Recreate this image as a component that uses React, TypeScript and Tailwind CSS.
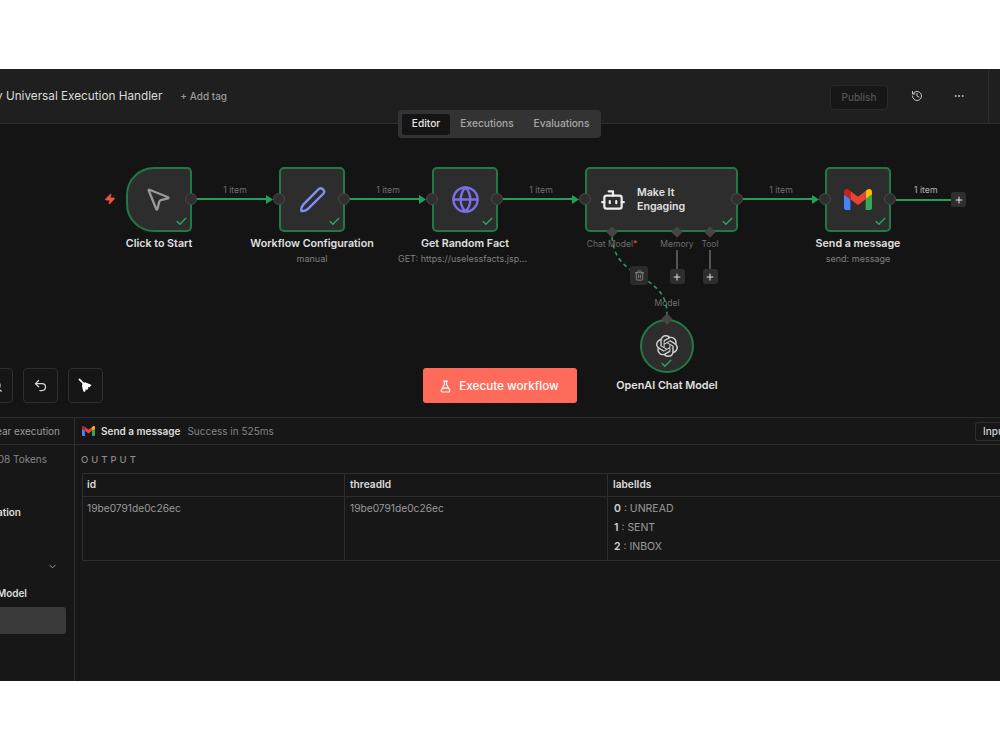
import type { ReactNode } from "react";
import { Bot, Check, ChevronDown, Ellipsis, FlaskConical, Globe, History, MousePointer2, Plus, Trash2, Undo2, Zap, ZoomOut } from "lucide-react";
import { SiOpenai } from "react-icons/si";

const GmailIcon = ({ className }: { className?: string }) => (
  <svg viewBox="52 42 88 66" className={className}>
    <path fill="#4285f4" d="M58 108h14V74L52 59v43c0 3.32 2.69 6 6 6" />
    <path fill="#34a853" d="M120 108h14c3.32 0 6-2.69 6-6V59l-20 15" />
    <path fill="#fbbc04" d="M120 48v26l20-15v-8c0-7.42-8.47-11.65-14.4-7.2" />
    <path fill="#ea4335" d="M72 74V48l24 18 24-18v26L96 92" />
    <path fill="#c5221f" d="M52 51v8l20 15V48l-5.6-4.2c-5.94-4.45-14.4-.22-14.4 7.2" />
  </svg>
);

const PenIcon = () => (
  <svg viewBox="0 0 30 30" className="h-[27px] w-[27px]" fill="none" stroke="#8390f5" strokeWidth="2.6" strokeLinejoin="round">
    <path d="M21.8 3.4a3.7 3.7 0 0 1 5.2 5.2L10 25.4c-2 1.8-5 2.6-7.4 2.4-.2-2.6.6-5.4 2.4-7.4z" />
  </svg>
);

const BroomIcon = () => (
  <svg viewBox="0 0 16 16" className="h-[15px] w-[15px]" fill="#ffffff">
    <path d="M1.5 1.5L6 6" stroke="#ffffff" strokeWidth="1.8" strokeLinecap="round" />
    <path d="M5 5.6L7.6 4.4L14.5 7.4L12 10L10.5 9.6L11 11.5L9 13L8.5 11.5L7.5 14.8L5.6 14L4.2 8.4z" />
  </svg>
);

const Done = ({ className = "right-[2px] bottom-[2px]" }: { className?: string }) => (
  <Check className={`absolute h-[13px] w-[13px] text-[#2fa866] ${className}`} strokeWidth={2.4} />
);

const AddButton = () => (
  <div className="flex h-[15px] w-[15px] shrink-0 items-center justify-center rounded-[3px] bg-[#2e2e2e]">
    <Plus className="h-[10px] w-[10px] text-[#dddddd]" strokeWidth={2.5} />
  </div>
);

type NodeProps = {
  title?: string;
  sub?: string;
  subClass?: string;
  boxClass: string;
  input?: boolean;
  children: ReactNode;
};

const Node = ({ title, sub, subClass = "", boxClass, input = true, children }: NodeProps) => (
  <div className="flex shrink-0 flex-col items-center">
    <div className={`relative flex h-[65px] items-center border-2 border-[#1f7a48] bg-[#2d2d2d] ${boxClass}`}>
      {input && <div className="absolute top-[24px] left-[-8px] h-[12px] w-[12px] rounded-full border border-[#484848] bg-[#2f2f2f]" />}
      {children}
      <div className="absolute top-[24px] right-[-7px] h-[12px] w-[12px] rounded-full border border-[#484848] bg-[#2f2f2f]" />
      <Done />
    </div>
    {title && (
      <div className="mt-[5px] flex w-0 justify-center text-[10.7px] leading-[14px] font-semibold whitespace-nowrap text-[#e0e0e0]">{title}</div>
    )}
    {sub && (
      <div className="mt-[2px] flex w-0 justify-center text-[9px] leading-[12px] whitespace-nowrap text-[#808080]">
        <span className={`shrink-0 ${subClass}`}>{sub}</span>
      </div>
    )}
  </div>
);

const Edge = () => (
  <div className="z-10 flex h-[65px] w-[87px] shrink-0 flex-col pt-[17px] pr-[6px] pl-[5px]">
    <span className="h-[12px] text-center text-[8.7px] leading-[12px] text-[#6f6f6f]">1 item</span>
    <div className="mt-[2px] flex h-[2px] items-center">
      <div className="h-[2px] flex-1 bg-[#22a05a]" />
      <svg viewBox="0 0 7 9" className="h-[9px] w-[7px] shrink-0 fill-[#22a05a]">
        <path d="M0 0l7 4.5L0 9z" />
      </svg>
    </div>
  </div>
);

const Connector = ({ label, line, className }: { label: ReactNode; line?: boolean; className: string }) => (
  <div className={`absolute top-[59px] flex w-[60px] flex-col items-center ${className}`}>
    <div className="h-[8px] w-[8px] rotate-45 bg-[#454545]" />
    <span className="mt-[2px] text-[8.5px] leading-[12px] whitespace-nowrap text-[#6f6f6f]">{label}</span>
    {line && <div className="h-[19px] w-[1.5px] bg-[#555555]" />}
    {line && <AddButton />}
  </div>
);

const Canvas = () => (
  <div className="relative h-[293px] overflow-hidden bg-[#141414] bg-[radial-gradient(#202020_0.8px,transparent_0.8px)] bg-[size:11px_11px]">
    {/* chat model link */}
    <svg className="absolute inset-0 h-full w-full" fill="none">
      <path d="M612 113C614 140 632 146 645 155C658 164 667 172 667 190" stroke="#22a05a" strokeWidth="1.6" strokeDasharray="4 3.5" />
    </svg>

    <Zap className="absolute top-[69px] left-[104px] h-[12px] w-[12px] fill-[#f0533f] text-[#f0533f]" />

    <div className="relative flex pt-[43px] pl-[126px]">
      <Node title="Click to Start" input={false} boxClass="w-[66px] justify-center rounded-l-[28px] rounded-r-[5px]">
        <MousePointer2 className="mr-[2px] mb-[2px] h-[28px] w-[28px] text-[#9a9a9a]" strokeWidth={2} />
      </Node>
      <Edge />
      <Node title="Workflow Configuration" sub="manual" boxClass="w-[66px] justify-center rounded-[5px]">
        <PenIcon />
      </Node>
      <Edge />
      <Node title="Get Random Fact" sub="GET: https://uselessfacts.jsp..." subClass="pr-[5px]" boxClass="w-[66px] justify-center rounded-[5px]">
        <Globe className="h-[29px] w-[29px] text-[#7b6fe6]" strokeWidth={2} />
      </Node>
      <Edge />
      <Node boxClass="w-[153px] gap-[11px] rounded-[5px] pl-[13px]">
        <Bot className="h-[26px] w-[26px] text-[#eeeeee]" strokeWidth={2} />
        <div className="text-[10.6px] leading-[14px] font-semibold text-[#e0e0e0]">
          Make It
          <br />
          Engaging
        </div>
        <Connector className="left-[-5px]" label={<>Chat Model<span className="text-[#e5484d]">*</span></>} />
        <Connector className="left-[60px]" label="Memory" line />
        <Connector className="left-[93px]" label="Tool" line />
      </Node>
      <Edge />
      <Node title="Send a message" sub="send: message" boxClass="w-[66px] justify-center rounded-[5px]">
        <GmailIcon className="h-[21px] w-[28px]" />
      </Node>
      <div className="relative flex h-[65px] items-center pl-[5px]">
        <span className="absolute top-[17px] left-[23px] text-[8.7px] leading-[12px] whitespace-nowrap text-[#b5b5b5]">1 item</span>
        <div className="h-[2px] w-[55px] bg-[#22a05a]" />
        <AddButton />
      </div>
    </div>

    <div className="absolute top-[142px] left-[630px] flex h-[19px] w-[18px] items-center justify-center rounded-[3px] bg-[#2b2b2b]">
      <Trash2 className="h-[11px] w-[11px] text-[#8a8a8a]" />
    </div>

    {/* OpenAI Chat Model */}
    <div className="absolute top-[173px] left-[640px] flex w-[54px] flex-col items-center">
      <span className="mb-[10px] text-[8.5px] leading-[12px] text-[#6f6f6f]">Model</span>
      <div className="relative flex h-[54px] w-[54px] shrink-0 items-center justify-center rounded-full border-2 border-[#1f7a48] bg-[#2d2d2d]">
        <div className="absolute top-[-6px] left-[21px] h-[8px] w-[8px] rotate-45 bg-[#454545]" />
        <SiOpenai className="h-[22px] w-[22px] text-[#cfcfcf]" />
        <Done className="bottom-[1px] left-[18px]" />
      </div>
      <div className="mt-[6px] text-[10.8px] leading-[14px] font-semibold whitespace-nowrap text-[#e0e0e0]">OpenAI Chat Model</div>
    </div>

    {/* canvas toolbar */}
    <div className="absolute inset-x-0 bottom-[14px] flex">
      <div className="ml-[-22px] flex gap-[10px]">
        <div className="flex h-[35px] w-[35px] items-center justify-center rounded-[4px] border border-[#2e2e2e] bg-[#161616]">
          <ZoomOut className="h-[14px] w-[14px] text-[#d5d5d5]" />
        </div>
        <div className="flex h-[35px] w-[35px] items-center justify-center rounded-[4px] border border-[#2e2e2e] bg-[#161616]">
          <Undo2 className="h-[15px] w-[15px] text-[#d5d5d5]" />
        </div>
        <div className="flex h-[35px] w-[35px] items-center justify-center rounded-[4px] border border-[#2e2e2e] bg-[#161616]">
          <BroomIcon />
        </div>
      </div>
      <button className="ml-[320px] flex h-[35px] w-[154px] items-center justify-center gap-[7px] rounded-[3px] bg-[#fe6b5a] pt-[2px] pr-[2px] text-[11.7px] font-medium text-white">
        <FlaskConical className="h-[13px] w-[13px]" />
        Execute workflow
      </button>
    </div>
  </div>
);

const Header = () => (
  <header className="relative flex h-[55px] items-center border-b border-[#2e2e2e] bg-[#1f1f1f]">
    <span className="mt-[2px] ml-[-4px] text-[11.75px] whitespace-nowrap text-[#dcdcdc]">y Universal Execution Handler</span>
    <span className="mt-[1px] ml-[18px] text-[10px] font-medium text-[#9a9a9a]">+ Add tag</span>
    <div className="ml-auto flex h-full items-center">
      <button className="mt-[2px] flex h-[25px] w-[58px] items-center justify-center rounded-[4px] border border-[#2a2a2a] bg-[#171717] text-[10px] font-medium text-[#555555]">
        Publish
      </button>
      <History className="ml-[23px] h-[12px] w-[12px] text-[#c8c8c8]" />
      <Ellipsis className="ml-[30px] h-[12px] w-[12px] text-[#c8c8c8]" />
      <div className="ml-[23px] h-full w-[12px] border-l border-[#2e2e2e]" />
    </div>
    <div className="absolute top-[41px] left-[398px] z-10 flex h-[28px] w-[203px] items-center gap-[3px] rounded-[4px] bg-[#333333] pl-[4px] text-[10.2px] font-medium text-[#a8a8a8]">
      <span className="flex h-[21px] w-[48px] items-center justify-center rounded-[3px] bg-[#141414] text-[#e8e8e8]">Editor</span>
      <span className="flex w-[68px] justify-center">Executions</span>
      <span className="ml-[3px] flex w-[69px] justify-center">Evaluations</span>
    </div>
  </header>
);

const Sidebar = () => (
  <aside className="w-[75px] shrink-0 border-r border-[#2e2e2e] text-[10px]">
    <div className="flex h-[27px] items-center justify-end border-b border-[#2e2e2e] pr-[14px] whitespace-nowrap text-[#9a9a9a]">ear execution</div>
    <div className="mt-[7px] flex justify-end pr-[27px] leading-[14px] whitespace-nowrap text-[#858585]">08 Tokens</div>
    <div className="mt-[39px] flex w-[21px] justify-end leading-[14px] font-semibold whitespace-nowrap text-[#dddddd]">ation</div>
    <div className="mt-[42px] flex justify-end pr-[16px]">
      <ChevronDown className="h-[11px] w-[11px] text-[#a0a0a0]" />
    </div>
    <div className="mt-[14px] flex w-[27px] justify-end leading-[14px] font-semibold whitespace-nowrap text-[#dddddd]">Model</div>
    <div className="mt-[7px] h-[27px] w-[66px] rounded-r-[3px] bg-[#3a3a3a]" />
  </aside>
);

const OutputTable = () => (
  <div className="ml-[7px] border-y border-l border-[#2e2e2e] text-[10.2px]">
    <div className="grid h-[23px] grid-cols-[262px_263px_400px] border-b border-[#2e2e2e] font-semibold text-[#dddddd]">
      <div className="flex items-center border-r border-[#2e2e2e] pl-[4px]">id</div>
      <div className="flex items-center border-r border-[#2e2e2e] pl-[5px]">threadId</div>
      <div className="flex items-center pl-[5px]">labelIds</div>
    </div>
    <div className="grid h-[63px] grid-cols-[262px_263px_400px] text-[#9a9a9a]">
      <div className="border-r border-[#2e2e2e] pt-[4px] pl-[4px] leading-[14px]">19be0791de0c26ec</div>
      <div className="border-r border-[#2e2e2e] pt-[4px] pl-[5px] leading-[14px]">19be0791de0c26ec</div>
      <div className="flex flex-col gap-[5px] pt-[5px] pl-[6px] text-[10.5px] leading-[14px]">
        <div><b className="font-semibold text-[#cfcfcf]">0</b> : UNREAD</div>
        <div><b className="font-semibold text-[#cfcfcf]">1</b> : SENT</div>
        <div><b className="font-semibold text-[#cfcfcf]">2</b> : INBOX</div>
      </div>
    </div>
  </div>
);

const BottomPanel = () => (
  <div className="flex h-[264px] border-t border-[#2e2e2e] bg-[#171717]">
    <Sidebar />
    <div className="min-w-0 flex-1 overflow-hidden">
      <div className="flex h-[27px] items-center border-b border-[#2e2e2e] pl-[7px] text-[10px]">
        <GmailIcon className="h-[10px] w-[13px]" />
        <span className="ml-[6px] font-semibold text-[#dddddd]">Send a message</span>
        <span className="ml-[7px] text-[#858585]">Success in 525ms</span>
        <div className="ml-auto flex h-[19px] w-[25px] items-center overflow-hidden rounded-l-[3px] border-y border-l border-[#2e2e2e] pl-[7px] font-medium text-[#d5d5d5]">
          Input
        </div>
      </div>
      <div className="pt-[8px] pb-[6px] pl-[6px] text-[9.5px] leading-[14px] font-medium tracking-[3px] text-[#8a8a8a]">OUTPUT</div>
      <OutputTable />
    </div>
  </div>
);

export default function App() {
  return (
    <div className="h-[750px] w-[1000px] overflow-hidden bg-white pt-[69px] font-['Inter',sans-serif]">
      <Header />
      <Canvas />
      <BottomPanel />
    </div>
  );
}
